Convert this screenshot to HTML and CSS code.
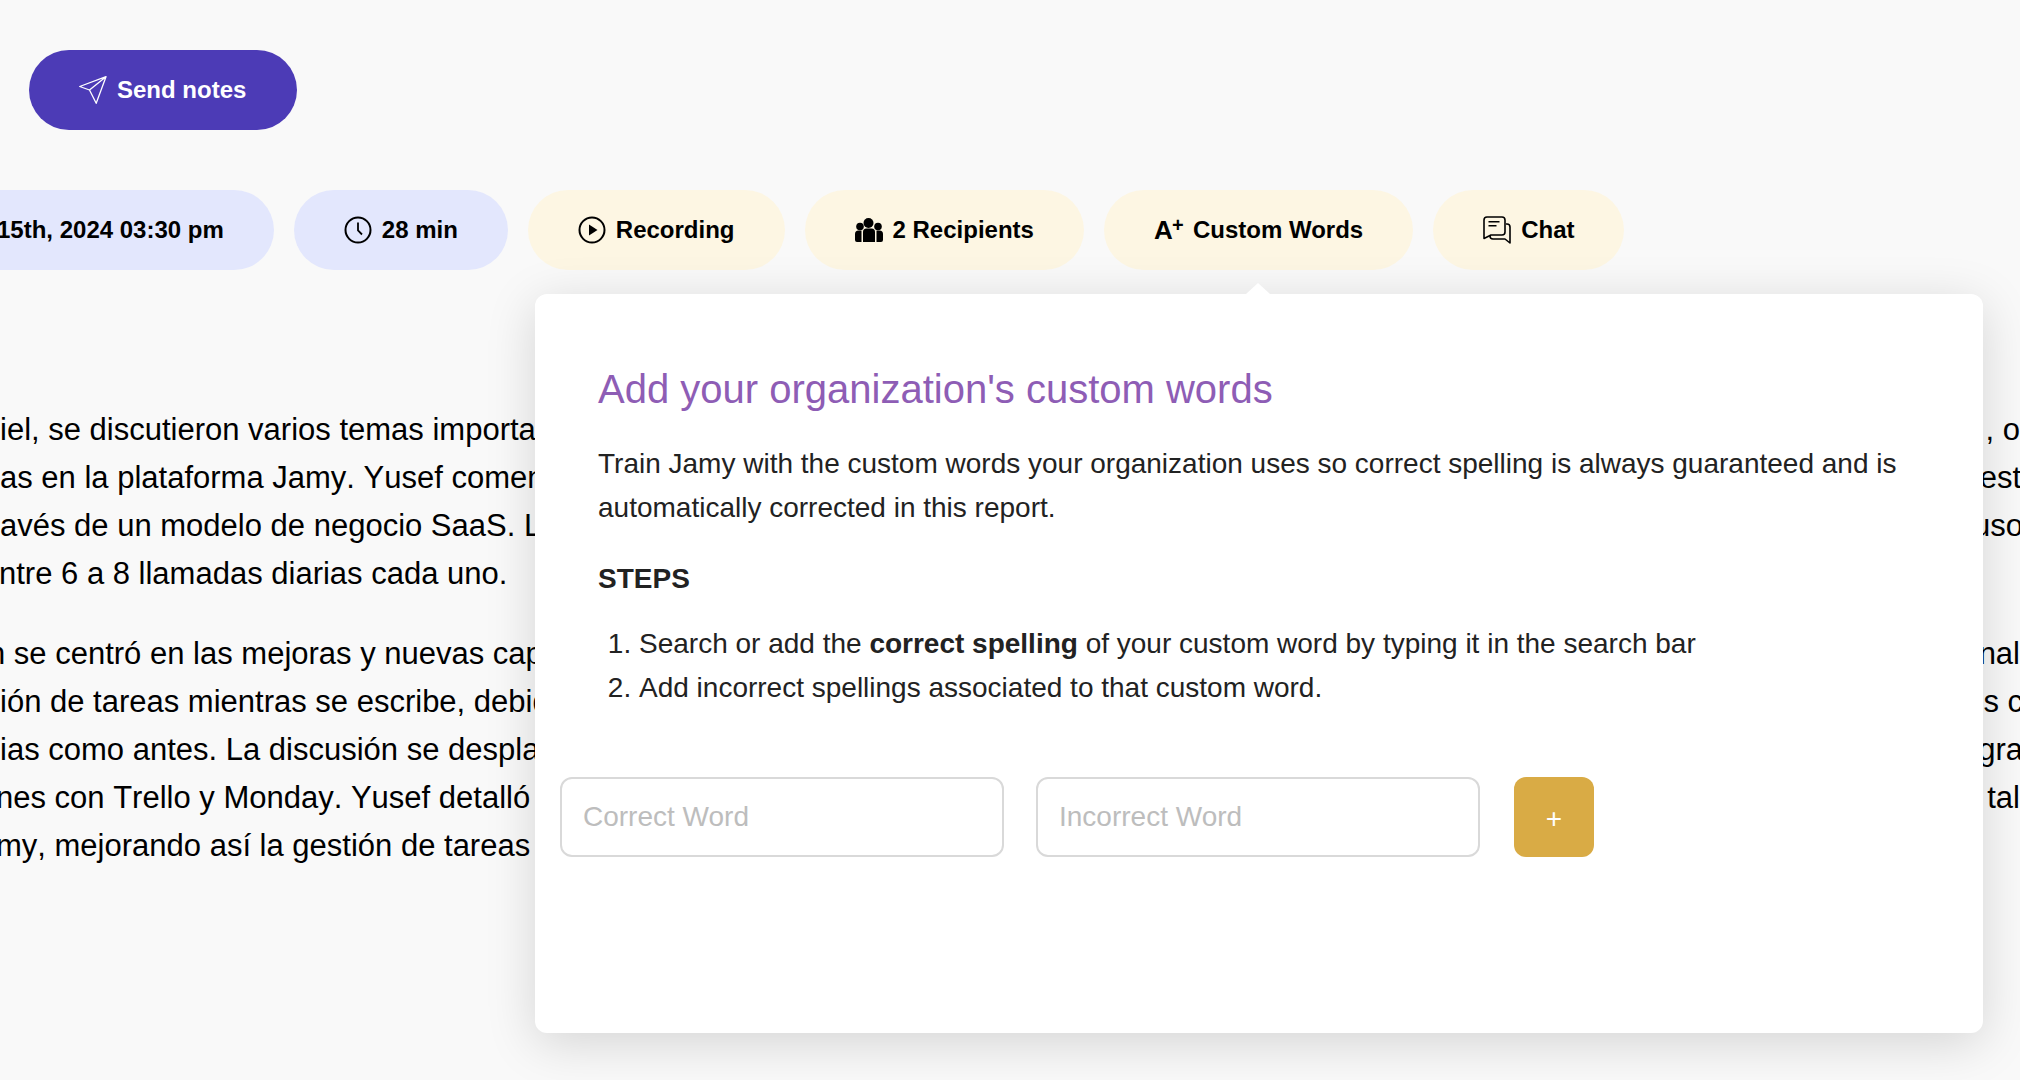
FILE: index.html
```html
<!DOCTYPE html>
<html lang="en">
<head>
<meta charset="utf-8">
<title>Custom words</title>
<link rel="stylesheet" href="styles.css">
</head>
<body>
<main class="page">
  <div class="actions">
    <button class="send">
      <svg class="icon" viewBox="0 0 28 28" fill="none" stroke="#fff" stroke-width="1.3" stroke-linejoin="round"><path d="M27 .7 .7 10.500l9.800 3.500 6.700 13.300zM27 .7 10.500 14"/></svg>
      <span>Send notes</span>
    </button>
  </div>
  <div class="pills">
    <div class="pill blue"><span>15th, 2024 03:30 pm</span></div>
    <div class="pill blue">
      <svg class="icon" viewBox="0 0 28 28" fill="none" stroke="#000" stroke-width="2"><circle cx="14" cy="14" r="12.5"/><path d="M14 6.5v8l4 4" stroke-width="1.8"/></svg>
      <span>28 min</span>
    </div>
    <div class="pill cream">
      <svg class="icon" viewBox="0 0 28 28" fill="none" stroke="#000" stroke-width="2"><circle cx="14" cy="14" r="12.5"/><path d="M11 8.500v11l8.500-5.500z" fill="#000" stroke="none"/></svg>
      <span>Recording</span>
    </div>
    <div class="pill cream">
      <svg class="icon" viewBox="0 0 28 28" fill="#000"><circle cx="13.500" cy="7" r="5"/><circle cx="5" cy="10.500" r="3.800"/><circle cx="23" cy="10.500" r="3.800"/><path d="M8 16q0-3.500 3.500-3.500h5q3.500 0 3.500 3.500v10H8zM0 18q0-3.500 3.500-3.500h3v11.500H2q-2 0-2-2zM28 18q0-3.500-3.500-3.500h-3v11.500H26q2 0 2-2z"/></svg>
      <span>2 Recipients</span>
    </div>
    <div class="pill cream active">
      <span class="aplus">A<sup>+</sup></span>
      <span>Custom Words</span>
    </div>
    <div class="pill cream">
      <svg class="icon" viewBox="0 0 28 28" fill="none" stroke="#000" stroke-width="1.600" stroke-linejoin="round"><path d="M1 4a3 3 0 0 1 3-3h15a3 3 0 0 1 3 3v12a3 3 0 0 1-3 3H8l-7 3.500z"/><path d="M23 8h1a3 3 0 0 1 3 3v16l-5-4H10a3 3 0 0 1-3-3"/><path d="M5.500 5.700h11M5.500 9.700h8"/></svg>
      <span>Chat</span>
    </div>
  </div>
  <article class="notes">
    <section class="para">
      <p class="line"><span>iel, se discutieron varios temas importantes</span><span>, o</span></p>
      <p class="line"><span>as en la plataforma Jamy. Yusef comenzó</span><span class="cut1">est</span></p>
      <p class="line"><span>avés de un modelo de negocio SaaS. Los</span><span class="cut2">uso</span></p>
      <p class="line"><span class="in1">ntre 6 a 8 llamadas diarias cada uno.</span></p>
    </section>
    <section class="para">
      <p class="line"><span class="in3">n se centró en las mejoras y nuevas capacidades</span><span>nal</span></p>
      <p class="line"><span>ión de tareas mientras se escribe, debido</span><span class="cut2">s c</span></p>
      <p class="line"><span>ias como antes. La discusión se desplazó</span><span class="cut2">gra</span></p>
      <p class="line"><span class="in2">nes con Trello y Monday. Yusef detalló cómo</span><span>tal</span></p>
      <p class="line"><span class="in2">my, mejorando así la gestión de tareas en</span></p>
    </section>
  </article>
  <aside class="modal">
    <div class="modal-copy">
      <h2>Add your organization's custom words</h2>
      <p>Train Jamy with the custom words your organization uses so correct spelling is always guaranteed and is automatically corrected in this report.</p>
      <h3>STEPS</h3>
      <ol>
        <li>Search or add the <strong>correct spelling</strong> of your custom word by typing it in the search bar</li>
        <li>Add incorrect spellings associated to that custom word.</li>
      </ol>
    </div>
    <form class="word-form">
      <input type="text" placeholder="Correct Word">
      <input type="text" placeholder="Incorrect Word">
      <button type="button" class="add">+</button>
    </form>
  </aside>
</main>
</body>
</html>
```
FILE: styles.css
```css
* { box-sizing: border-box; }
html, body { margin: 0; height: 100%; }
body {
  background: #f9f9f9;
  color: #000;
  font-family: "Liberation Sans", Arial, sans-serif;
  overflow: hidden;
}
.page { position: relative; width: 2020px; height: 1080px; overflow: hidden; }
.actions { padding: 50px 0 0 29px; }
.icon { width: 28px; height: 28px; flex: none; display: block; }
.send {
  display: flex; align-items: center; gap: 10px;
  height: 80px; padding: 0 51px 0 50px; border: 0; border-radius: 40px;
  background: #4c3bb6; color: #fff;
  font: bold 24px "Liberation Sans", Arial, sans-serif;
}
.pills { display: flex; gap: 20px; margin: 60px 0 0 -53px; }
.pill {
  display: flex; align-items: center; gap: 10px;
  height: 80px; padding: 0 50px; border-radius: 40px;
  font-size: 24px; font-weight: bold; white-space: nowrap; flex: none;
}
.blue { background: #e3e7fd; }
.cream { background: #fdf6e3; }
.aplus { width: 29px; font-size: 26px; line-height: 28px; position: relative; }
.aplus sup { position: absolute; left: 18px; top: -1px; font-size: 20px; line-height: 20px; }
.notes { margin-top: 136px; width: 2020px; }
.para { margin: 0 0 32px; }
.line {
  display: flex; justify-content: space-between;
  margin: 0; height: 48px; font-size: 31px; line-height: 48px; white-space: nowrap;
  font-kerning: none;
}
.in1 { margin-left: -1px; }
.in2 { margin-left: -4px; }
.in3 { margin-left: -12px; }
.cut1 { margin-right: -1px; }
.cut2 { margin-right: -3px; }
.modal {
  position: absolute; left: 535px; top: 294px; width: 1448px; height: 739px;
  background: #fff; border-radius: 12px;
  box-shadow: 0 10px 50px rgba(0, 0, 0, .15);
}
.modal::before {
  content: ""; position: absolute; left: 711px; top: -11px;
  border-left: 12px solid transparent; border-right: 12px solid transparent;
  border-bottom: 11px solid #fff;
}
.modal-copy { padding: 70px 63px 0; color: #222; font-size: 28px; line-height: 44px; }
.modal-copy h2 { margin: 0 0 28px; font-size: 40px; line-height: 50px; font-weight: 400; color: #8e5db5; }
.modal-copy p { margin: 0; }
.modal-copy h3 { margin: 27px 0 0; font-size: 28px; line-height: 44px; font-weight: bold; }
.modal-copy ol { margin: 21px 0 0; padding-left: 41px; }
.word-form { display: flex; gap: 32px; margin: 67px 0 0 25px; }
.word-form input {
  width: 444px; height: 80px; padding: 0 21px;
  border: 2px solid #d9d9d9; border-radius: 12px; background: #fff;
  font: 28px "Liberation Sans", Arial, sans-serif;
}
.word-form input::placeholder { color: #bdbdbd; opacity: 1; }
.add {
  width: 80px; height: 80px; margin-left: 2px; padding: 4px 0 0; border: 0; border-radius: 12px;
  background: #d9ab45; color: #fff; font: 28px "Liberation Sans", Arial, sans-serif;
}
```
